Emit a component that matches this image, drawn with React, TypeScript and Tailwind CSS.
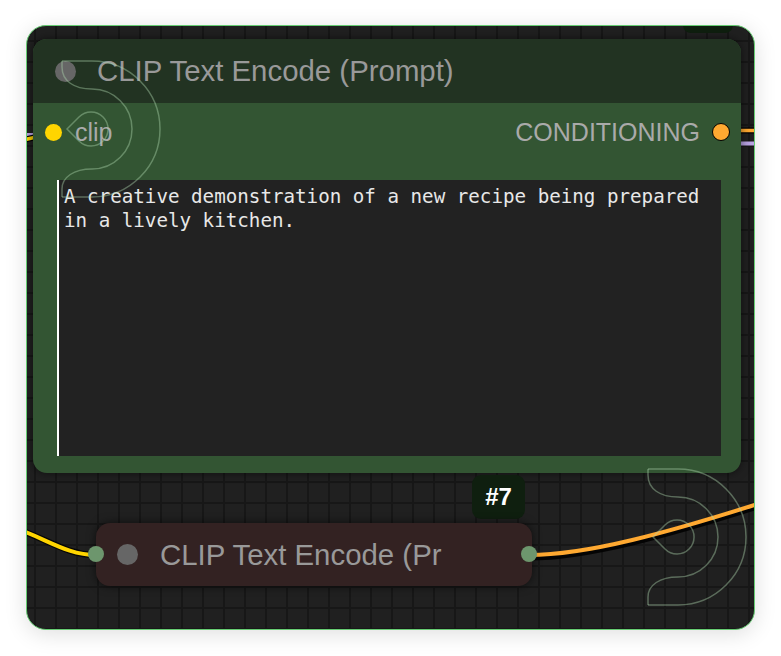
import React from 'react';

const sans = "font-['Liberation_Sans',Arial,sans-serif]";

function LinkMark({ className }: { className: string }) {
  // faint outlined "reroute" glyph that floats over the canvas
  return (
    <svg className={className} width="104" height="142" viewBox="-2 -2 104 142" fill="none">
      <g stroke="rgba(175,215,175,0.42)" strokeWidth="1.5">
        <path d="M0 0 H30 A68 68 0 0 1 30 136 H0" />
        <path d="M0 0 V6 C0 20 12 28 30 28 A40 40 0 0 1 30 108 C12 108 0 116 0 128 V136" />
        <path d="M5 68 L17 56 A17 17 0 1 1 17 80 Z" />
      </g>
    </svg>
  );
}

function Wires() {
  return (
    <svg className="absolute inset-0" width="727" height="603" fill="none">
      {/* wires running behind the prompt node */}
      <path d="M-10 109 L14 109" stroke="#b9a3e3" strokeWidth="4" />
      <path d="M-10 115 C4 113 14 109 26 107" stroke="#000" strokeWidth="6" />
      <path d="M-10 115 C4 113 14 109 26 107" stroke="#FFD500" strokeWidth="3.5" />
      <path d="M700 104.5 L740 104.5" stroke="#000" strokeWidth="6" />
      <path d="M700 104.5 L740 104.5" stroke="#FFA931" strokeWidth="3.5" />
      <path d="M700 117.5 L740 117.5" stroke="#b9a3e3" strokeWidth="4" />
      {/* clip wire into the collapsed node */}
      <path d="M-10 503 C20 513 40 529 69 529" stroke="#000" strokeWidth="6.5" strokeOpacity="0.8" />
      <path d="M-10 503 C20 513 40 529 69 529" stroke="#FFD500" strokeWidth="4" />
      {/* conditioning wire out */}
      <path d="M502 531 C560 531 640 509 740 477" stroke="#000" strokeWidth="7" strokeOpacity="0.85" />
      <path d="M502 529 C560 529 640 507 740 475" stroke="#FFA931" strokeWidth="4" />
    </svg>
  );
}

function PromptNode() {
  return (
    <div className="absolute left-[6px] top-[13px] w-[708px] h-[434px] flex flex-col rounded-[14px] overflow-hidden bg-[#335533] shadow-[0_0_10px_rgba(0,0,0,0.55)]">
      <div className="h-[64px] shrink-0 flex items-center gap-[21px] pl-[22px] bg-[#223322]">
        <span className="w-[21px] h-[21px] rounded-full bg-[#666]" />
        <span className={`${sans} text-[29.4px] text-[#999] leading-none`}>CLIP Text Encode (Prompt)</span>
      </div>
      <div className="h-[58px] shrink-0 flex items-center justify-between pl-[12px] pr-[11px]">
        <div className="flex items-center gap-[13px]">
          <span className="w-[17px] h-[17px] rounded-full bg-[#FFD500]" />
          <span className={`${sans} text-[25px] text-[#aaa] leading-none`}>clip</span>
        </div>
        <div className="flex items-center gap-[12px]">
          <span className={`${sans} text-[25px] text-[#aaa] leading-none`}>CONDITIONING</span>
          <span className="w-[18px] h-[18px] rounded-full bg-[#FFA931] border-[1.5px] border-black" />
        </div>
      </div>
      <div className="flex-1 mt-[19px] mb-[17px] ml-[24px] mr-[20px] flex">
        <textarea
          readOnly
          defaultValue="A creative demonstration of a new recipe being prepared in a lively kitchen."
          className="flex-1 resize-none outline-none overflow-hidden bg-[#222222] border-l-2 border-white pl-[5px] pr-[10px] pt-[5px] font-['DejaVu_Sans_Mono',monospace] text-[19.2px] leading-[24px] text-[#e8e8e8]"
        />
      </div>
    </div>
  );
}

function CollapsedNode() {
  return (
    <div className="absolute left-[69px] top-[497px] w-[436px] h-[63px] flex items-center gap-[22px] pl-[21px] rounded-[14px] bg-[#332222] shadow-[0_0_10px_rgba(0,0,0,0.6)]">
      <span className="absolute left-[-8px] top-[23px] w-[16px] h-[16px] rounded-full bg-[#6d966d]" />
      <span className="w-[21px] h-[21px] rounded-full bg-[#666]" />
      <span className={`${sans} text-[29.4px] text-[#999] leading-none`}>CLIP Text Encode (Pr</span>
      <span className="absolute right-[-5px] top-[23px] w-[16px] h-[16px] rounded-full bg-[#6d966d]" />
    </div>
  );
}

export default function App() {
  return (
    <div className="min-h-screen bg-white pt-[25px] pl-[26px]">
      <div className="relative w-[729px] h-[605px] rounded-[20px] border border-[#66cc72] overflow-hidden shadow-[0_4px_22px_rgba(0,0,0,0.13)] bg-[#202020] bg-[linear-gradient(to_right,#171717_2px,transparent_2px),linear-gradient(to_bottom,#171717_2px,transparent_2px)] bg-[size:21px_21px] bg-[position:7px_14px]">
        <div className="absolute left-[656px] top-[-12px] w-[50px] h-[19px] rounded-lg bg-[#0f1f0f]" />
        <Wires />
        <PromptNode />
        <div className="absolute left-[445px] top-[449px] w-[53px] h-[44px] flex items-center justify-center rounded-[9px] bg-[#0f1f0f]">
          <span className={`${sans} text-[24px] font-bold text-white leading-none`}>#7</span>
        </div>
        <CollapsedNode />
        <LinkMark className="absolute left-[33px] top-[33px]" />
        <LinkMark className="absolute left-[619px] top-[441px]" />
      </div>
    </div>
  );
}
